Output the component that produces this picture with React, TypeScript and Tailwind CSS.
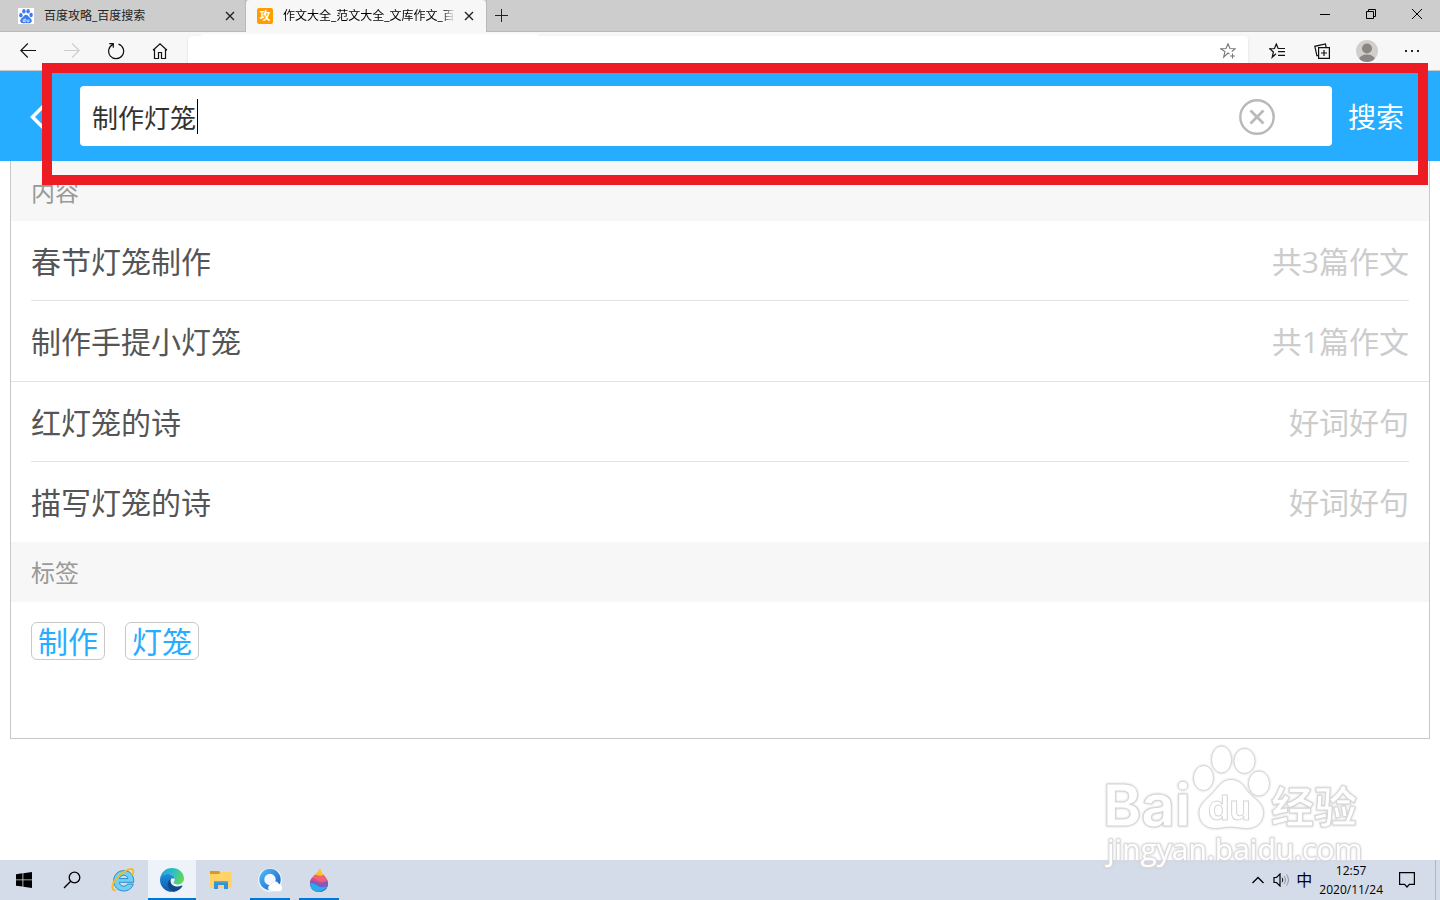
import React from "react";

type Entry = { title: string; note: string };

const groups: Entry[][] = [
  [
    { title: "春节灯笼制作", note: "共3篇作文" },
    { title: "制作手提小灯笼", note: "共1篇作文" },
  ],
  [
    { title: "红灯笼的诗", note: "好词好句" },
    { title: "描写灯笼的诗", note: "好词好句" },
  ],
];

const tags = ["制作", "灯笼"];

const PawIcon = () => (
  <svg width="16" height="16" viewBox="0 0 16 16" className="shrink-0 bg-white">
    <g fill="#3b7bf0">
      <ellipse cx="2.9" cy="7.2" rx="1.7" ry="2.2" />
      <ellipse cx="5.9" cy="3.3" rx="1.7" ry="2.3" />
      <ellipse cx="10.1" cy="3.3" rx="1.7" ry="2.3" />
      <ellipse cx="13.1" cy="7" rx="1.7" ry="2.2" />
      <path d="M8 6.800c1.700 0 2.300 1.500 3.300 2.500s2.500 1.800 2.500 3.500c0 1.600-1.200 2.500-2.700 2.500-1.200 0-2-.3-3.100-.3s-1.900.3-3.100.3c-1.500 0-2.700-.9-2.700-2.500 0-1.700 1.500-2.500 2.500-3.500S6.300 6.800 8 6.800z" />
    </g>
    <path
      d="M7.200 10.400v3.200M7.200 11.700H6a1 1 0 0 0 0 2h1.200M9 11.500v1.600c0 .4.2.6.6.6h1.300v-2.200"
      fill="none"
      stroke="#fff"
      strokeWidth=".8"
    />
  </svg>
);

const CloseIcon = () => (
  <svg width="10" height="10" viewBox="0 0 10 10" stroke="#222" strokeWidth="1.4">
    <path d="M1 1l8 8M9 1L1 9" />
  </svg>
);

const TabStrip = () => (
  <div className="flex h-8 bg-[#cdcdcd] text-xs leading-4 text-[#222]">
    <div className="flex w-[246px] items-center border-r border-b border-[#b9b9b9] pr-2.5 pl-[18px]">
      <PawIcon />
      <span className="ml-2.5 flex-1 whitespace-nowrap">百度攻略_百度搜索</span>
      <button type="button" aria-label="关闭标签页" className="flex">
        <CloseIcon />
      </button>
    </div>
    <div className="flex w-60 items-center rounded-t bg-[#f7f7f7] pr-3 pl-[11px] text-black">
      <span className="flex size-4 shrink-0 items-center justify-center rounded-xs bg-[#ff9c00] text-[11px] leading-4 font-bold text-white">
        攻
      </span>
      <span className="ml-2.5 w-[172px] overflow-hidden mask-r-from-92% whitespace-nowrap">
        作文大全_范文大全_文库作文_百度
      </span>
      <button type="button" aria-label="关闭标签页" className="ml-auto flex">
        <CloseIcon />
      </button>
    </div>
    <div className="flex flex-1 border-b border-l border-[#b9b9b9]">
      <button type="button" aria-label="新建标签页" className="flex w-7 items-center justify-center">
        <svg width="13" height="13" viewBox="0 0 13 13" stroke="#222">
          <path d="M6.500 0v13M0 6.500h13" />
        </svg>
      </button>
      <div className="ml-auto flex h-7">
        <button type="button" aria-label="最小化" className="flex w-[46px] items-center justify-center">
          <svg width="10" height="11" viewBox="0 0 10 11" stroke="#000">
            <path d="M0 5.500h10" />
          </svg>
        </button>
        <button type="button" aria-label="还原" className="flex w-[46px] items-center justify-center">
          <svg width="10" height="10" viewBox="0 0 10 10" fill="none" stroke="#000">
            <path d="M.5 2.500h7v7h-7zM2.500 2.500v-2h7v7h-2" />
          </svg>
        </button>
        <button type="button" aria-label="关闭" className="flex w-[46px] items-center justify-center">
          <svg width="10" height="10" viewBox="0 0 10 10" stroke="#000">
            <path d="M0 0l10 10M10 0L0 10" />
          </svg>
        </button>
      </div>
    </div>
  </div>
);

const Toolbar = () => (
  <div className="flex h-[39px] items-center border-b border-[#c8c8c8] bg-[#f7f7f7] pr-1.5 pl-1.5">
    <button type="button" aria-label="后退" className="flex w-11 justify-center">
      <svg width="16" height="16" viewBox="0 0 16 16" fill="none" stroke="#111" strokeWidth="1.1">
        <path d="M16 7.500H.8M7.800.5l-7 7 7 7" />
      </svg>
    </button>
    <button type="button" aria-label="前进" className="flex w-11 justify-center">
      <svg width="16" height="16" viewBox="0 0 16 16" fill="none" stroke="#ccc" strokeWidth="1.1">
        <path d="M0 7.500h15.200M8.200.5l7 7-7 7" />
      </svg>
    </button>
    <button type="button" aria-label="刷新" className="flex w-11 justify-center">
      <svg width="18" height="18" viewBox="0 0 18 18" fill="none" stroke="#111" strokeWidth="1.200">
        <path d="M11.500 2.100a7.500 7.500 0 1 1-5.500.3M2.300 1.700h4v4" />
      </svg>
    </button>
    <button type="button" aria-label="主页" className="flex w-11 justify-center">
      <svg width="16" height="18" viewBox="0 0 16 18" fill="none" stroke="#111" strokeWidth="1.200">
        <path d="M1 8.300L8 1.700l7 6.600M2.500 7v9.500h4v-6h3v6h4V7" />
      </svg>
    </button>
    <div className="relative ml-1.5 flex h-[30px] flex-1 items-center rounded-t bg-white pr-3 shadow-sm">
      <span className="absolute -top-0.5 left-[13px] h-1 w-[337px] bg-white" />
      <input type="text" aria-label="地址栏" className="min-w-0 flex-1 px-3 text-sm outline-none" />
      <button type="button" aria-label="收藏此页" className="flex">
        <svg width="16" height="16" viewBox="0 0 16 16" fill="none" stroke="#777" strokeWidth="1.1">
          <path d="M9.500 11L8 10l-4.300 4.200 1.200-5.600L.8 5.800l5.200-.3L8 .8l2 4.700 5.200.3-3.400 2.700M12.500 10.500v5M10 13h5" />
        </svg>
      </button>
    </div>
    <div className="ml-1.5 flex items-center">
      <button type="button" aria-label="收藏夹" className="flex w-[45px] justify-center">
        <svg width="16" height="16" viewBox="0 0 16 16" fill="none" stroke="#111" strokeWidth="1.200">
          <path d="M7 10.800l-3.800 3.500L4.400 9 .8 5.800l4.700-.3L7.300 1l1.900 4.500H16M9 8.700h7M9 12.400h7" />
        </svg>
      </button>
      <button type="button" aria-label="集锦" className="flex w-[45px] justify-center">
        <svg width="16" height="16" viewBox="0 0 16 16" fill="none" stroke="#111" strokeWidth="1.200">
          <path d="M4.600 4.600h10.800v10.800H4.600zM10 7v6M7 10h6M12.200 4.500l-.8-3.600L.8 3.300l2.100 9.300h1.700" />
        </svg>
      </button>
      <button type="button" aria-label="个人资料" className="flex w-[45px] justify-center">
        <svg width="22" height="22" viewBox="0 0 22 22">
          <clipPath id="face">
            <circle cx="11" cy="11" r="11" />
          </clipPath>
          <g clipPath="url(#face)">
            <rect width="22" height="22" fill="#d2cfcb" />
            <circle cx="11" cy="8.500" r="5" fill="#8a8684" />
            <ellipse cx="11" cy="19.500" rx="8" ry="5" fill="#8a8684" />
          </g>
        </svg>
      </button>
      <button type="button" aria-label="设置及其他" className="flex w-[45px] justify-center">
        <svg width="14" height="2" viewBox="0 0 14 2" fill="#222">
          <path d="M0 0h2v2H0zM6 0h2v2H6zM12 0h2v2h-2z" />
        </svg>
      </button>
    </div>
  </div>
);

const SearchHeader = () => (
  <form className="flex h-[90px] items-center bg-[#26adff]" onSubmit={(e) => e.preventDefault()}>
    <button type="button" aria-label="返回" className="flex w-20 pt-0.5 pl-[30px]">
      <svg width="16" height="28" viewBox="0 0 16 28" fill="none" stroke="#fff" strokeWidth="3.500">
        <path d="M15 1.500L2.500 14 15 26.500" />
      </svg>
    </button>
    <div className="relative flex h-[60px] flex-1 items-center rounded bg-white pt-0.5 pr-[57px]">
      <input
        type="text"
        aria-label="搜索作文"
        defaultValue="制作灯笼"
        className="h-full min-w-0 flex-1 pl-3 text-[26px] text-[#333] outline-none"
      />
      <span className="absolute top-[13px] left-[117px] h-[35px] w-px bg-black" />
      <button type="reset" aria-label="清空" className="flex">
        <svg width="36" height="36" viewBox="0 0 36 36" fill="none" stroke="#b9b9b9">
          <circle cx="18" cy="18" r="16.700" strokeWidth="2.400" />
          <path d="M11.500 11.500l13 13M24.500 11.500l-13 13" strokeWidth="2.800" />
        </svg>
      </button>
    </div>
    <button type="submit" className="pt-0.5 pr-9 pl-4 text-[28px] leading-10 whitespace-nowrap text-white">
      搜索
    </button>
  </form>
);

const SectionTitle = ({ children }: { children: React.ReactNode }) => (
  <h2 className="flex h-[60px] items-center bg-[#f7f7f7] px-5 pt-0.5 text-2xl leading-9 text-[#999]">{children}</h2>
);

const Results = () => (
  <main className="mx-2.5 border border-t-0 border-[#c8c8c8] bg-white">
    <SectionTitle>内容</SectionTitle>
    <div className="divide-y divide-[#e3e3e3]">
      {groups.map((group, i) => (
        <ul key={i} className="px-5">
          {group.map((entry, j) => (
            <li key={entry.title} className={j === 0 ? "border-b border-[#e3e3e3]" : ""}>
              <a
                href="#"
                className={`flex items-center justify-between pt-0.5 text-3xl leading-10 ${j === 0 ? "h-[79px]" : "h-20"}`}
              >
                <span className="text-[#555]">{entry.title}</span>
                <span className="text-[#ccc]">{entry.note}</span>
              </a>
            </li>
          ))}
        </ul>
      ))}
    </div>
    <SectionTitle>标签</SectionTitle>
    <div className="flex gap-5 px-5 pt-5 pb-[78px]">
      {tags.map((tag) => (
        <a
          key={tag}
          href="#"
          className="flex h-[38px] items-center rounded-md border border-[#c8c8c8] px-1.5 pt-0.5 text-3xl leading-9 text-[#26adff]"
        >
          {tag}
        </a>
      ))}
    </div>
  </main>
);

const Watermark = () => (
  <svg
    width="290"
    height="140"
    viewBox="0 0 290 140"
    className="pointer-events-none absolute right-[60px] bottom-[30px] drop-shadow-[0_0_1px_#ccc]"
  >
    <g fill="#fff" stroke="#d6d6d6">
      <text x="13" y="96" fontSize="58" fontWeight="700" className="font-['Inter',sans-serif]">
        Bai
      </text>
      <ellipse cx="113.500" cy="48" rx="10" ry="12.500" />
      <ellipse cx="131.500" cy="29.500" rx="10" ry="13.500" />
      <ellipse cx="154.500" cy="31" rx="10.500" ry="12.500" />
      <ellipse cx="169" cy="53.500" rx="10.500" ry="12.500" />
      <path d="M141 49.500c8 0 12 5 16 11 5 7 17 12 16.500 23-.5 9-7 15-17 15-6 0-10-1.500-16-1.500s-10 1.500-15 1.500c-10 0-16-6-16.500-15-.5-10 9-15 15-22 5-6 9-12 17-12z" />
      <text x="118" y="90" fontSize="34" fontWeight="700" className="font-['Inter',sans-serif]">
        du
      </text>
      <text x="181" y="93" fontSize="43" fontWeight="700" className="font-['Noto_Sans_CJK_SC',sans-serif]">
        经验
      </text>
    </g>
    <text
      x="17"
      y="130"
      fontSize="30"
      fill="#fff"
      stroke="#dcdcdc"
      strokeWidth="2"
      paintOrder="stroke"
      className="font-['Open_Sans',sans-serif]"
    >
      jingyan.baidu.com
    </text>
  </svg>
);

const Taskbar = () => (
  <footer className="flex h-10 items-stretch bg-[#d4dbe9]">
    <button type="button" aria-label="开始" className="flex w-12 items-center justify-center">
      <svg width="16" height="16" viewBox="0 0 16 16" fill="#000">
        <path d="M0 2.200L6.500 1.300v6.200H0zM7.300 1.200L16 0v7.500H7.300zM0 8.300h6.500v6.300L0 13.700zM7.300 8.300H16V16l-8.700-1.300z" />
      </svg>
    </button>
    <button type="button" aria-label="搜索" className="flex w-12 items-center justify-center">
      <svg width="18" height="18" viewBox="0 0 18 18" fill="none" stroke="#000" strokeWidth="1.300">
        <circle cx="11.500" cy="6.500" r="5.300" />
        <path d="M7.700 10.300L1 17" />
      </svg>
    </button>
    <div className="ml-[3px] flex gap-px">
      <button type="button" aria-label="Internet Explorer" className="flex w-12 items-center justify-center">
        <svg width="24" height="24" viewBox="0 0 24 24">
          <path
            d="M12.700 2.600C6.900 2.600 2.700 7 2.700 12.800S6.900 23 12.700 23c4.700 0 8.400-2.700 9.600-7h-5.800c-.7 1.400-2 2.200-3.700 2.200-2.500 0-4.200-1.500-4.400-3.900h14.300c.5-6.800-3.400-11.700-10-11.700zM8.500 10.600c.4-2 2-3.300 4.200-3.300 2.300 0 3.900 1.300 4.200 3.300z"
            fill="#6fd0f5"
            stroke="#2385bd"
            strokeWidth=".9"
            fillRule="evenodd"
          />
          <path
            d="M4.800 22.300C-.8 22.700 1 14.500 7.500 8.300 13.500 2.500 20.500-.6 22 1.900c.8 1.200.4 3.100-.8 5.200"
            fill="none"
            stroke="#f5bd22"
            strokeWidth="1.900"
          />
        </svg>
      </button>
      <button
        type="button"
        aria-label="Microsoft Edge"
        className="flex w-12 items-center justify-center border-t-2 border-b-2 border-t-transparent border-b-[#0078d7] bg-[#eef2f9]"
      >
        <svg width="24" height="24" viewBox="0 0 24 24">
          <defs>
            <linearGradient id="edgeTop" x1="0" x2="1" y1=".2" y2=".5">
              <stop offset="0" stopColor="#1e9fe0" />
              <stop offset=".5" stopColor="#2bbfc5" />
              <stop offset="1" stopColor="#62d957" />
            </linearGradient>
            <linearGradient id="edgeLeft" x1="0" x2="0" y1="0" y2="1">
              <stop offset="0" stopColor="#1b8fdc" />
              <stop offset="1" stopColor="#1059a8" />
            </linearGradient>
          </defs>
          <path d="M0 11C.6 4.800 5.600 0 12 0c7 0 12 5 12 10.400 0 3.500-2.700 6-6.100 6-2.800 0-4.400-.9-4.400-1.900 0-.6 1.200-1.200 1.200-3C14.700 8.600 11.700 6 7.800 6 4.300 6 1.300 8 0 11z" fill="url(#edgeTop)" />
          <path d="M0 12c0-3.700 3.500-6 7.800-6 3.900 0 6.600 2.300 6.900 5.200-.9-1.300-2.600-1.300-3.700-.4-1.900 1.400-2.500 3.500-2 6 .7 3.400 3 6 6 6.700C7.500 25.300 0 20 0 12z" fill="url(#edgeLeft)" />
          <path d="M11 10.800c-3.200 1.800-4 5.200-2.600 8.500 1.100 2.600 3.700 4.200 6.100 4.400 3.300-.7 6.200-2.800 7.900-5.500.3-.5-.1-.8-.6-.6C16 20.300 8.800 17.200 11 10.800z" fill="#114a8b" />
        </svg>
      </button>
      <button type="button" aria-label="文件资源管理器" className="flex w-12 items-center justify-center">
        <svg width="22" height="20" viewBox="0 0 22 20">
          <path d="M0 1h9l1 1v3H0z" fill="#d99a16" />
          <path d="M0 4h9l2-2h10.500v16H0z" fill="#ffd367" />
          <path d="M4 19v-8h14v8h-4v-4H8v4z" fill="#3490db" />
          <path d="M4 11h14v1.500H4z" fill="#59a9e4" />
        </svg>
      </button>
      <button type="button" aria-label="QQ浏览器" className="flex w-12 flex-col items-center">
        <span className="flex h-[38px] items-center pt-0.5">
          <svg width="24" height="24" viewBox="0 0 24 24">
            <defs>
              <linearGradient id="cloudRing" x1="0" x2="1" y1="0" y2="1">
                <stop offset="0" stopColor="#4db4f5" />
                <stop offset="1" stopColor="#1b66c9" />
              </linearGradient>
            </defs>
            <circle cx="12" cy="12" r="12" fill="#eef4fb" />
            <circle cx="12" cy="11.500" r="8.200" fill="#f4f8fd" stroke="url(#cloudRing)" strokeWidth="5" />
            <path d="M13.500 23.500a3.500 3.500 0 0 1-.6-6.900 4.300 4.300 0 0 1 8-.5 3.600 3.600 0 0 1 0 7.400z" fill="#fff" stroke="#c8def2" strokeWidth=".5" />
          </svg>
        </span>
        <span className="h-0.5 w-10 bg-[#0078d7]" />
      </button>
      <button type="button" aria-label="画图 3D" className="flex w-12 flex-col items-center">
        <span className="flex h-[38px] items-center pt-0.5">
          <svg width="20" height="24" viewBox="0 0 20 24">
            <clipPath id="drop">
              <path d="M11 0c.5 3 2 5 4 7.300 2.500 3 4 5 4 8.200C19 20.300 15 24 10 24s-9-3.700-9-8.500c0-3.500 1.500-5.500 4.300-8.300C7.500 5 10 3 11 0z" />
            </clipPath>
            <g clipPath="url(#drop)">
              <rect width="20" height="24" fill="#fdc417" />
              <path d="M0 8c5-3 8-.5 11-.3 3 .2 3-1.700 9-2.700V24H0z" fill="#ee6379" />
              <path d="M0 10c6-1.500 8 3 12 3.500 4 .5 5-1 8-2V24H0z" fill="#d44e8c" />
              <path d="M0 13c5-1.500 7 1 10 1.700 4 .8 6-1.500 10-.7V24H0z" fill="#7c5cc4" />
              <path d="M0 15.500c4-1 6 .5 9 2.500s6 1.500 11-.5V24H0z" fill="#27aeea" />
              <path d="M8 24c4-.5 8-2.500 11-6l1 6z" fill="#1585cf" />
            </g>
          </svg>
        </span>
        <span className="h-0.5 w-10 bg-[#0078d7]" />
      </button>
    </div>
    <div className="ml-auto flex items-center text-xs text-black">
      <svg width="12" height="8" viewBox="0 0 12 8" fill="none" stroke="#000" strokeWidth="1.300">
        <path d="M.5 7L6 1.500 11.500 7" />
      </svg>
      <svg width="17" height="14" viewBox="0 0 17 14" fill="none" className="ml-[9px]">
        <path d="M1 4.500h2.500L7 1v12L3.500 9.500H1z" stroke="#000" strokeWidth="1.200" />
        <path d="M9 4.800c1 1.300 1 3.100 0 4.400" stroke="#000" />
        <path d="M11 3c2 2.300 2 5.700 0 8M13.300 1.300c2.800 3.300 2.800 8.100 0 11.400" stroke="#8e949e" />
      </svg>
      <span className="ml-1.5 text-base leading-5">中</span>
      <div className="ml-[7px] text-center leading-[19px]">
        <div>12:57</div>
        <div>2020/11/24</div>
      </div>
      <svg width="16" height="16" viewBox="0 0 16 16" fill="none" stroke="#000" strokeWidth="1.200" className="ml-4">
        <path d="M.6.6h14.800v11.800h-5L8 15l-2.400-2.600h-5z" />
      </svg>
      <span className="mr-1 ml-5 h-10 w-px bg-[#aeb6c6]" />
    </div>
  </footer>
);

const App = () => {
  return (
    <div className="relative flex min-h-screen flex-col bg-white font-['Open_Sans','Noto_Sans_CJK_SC',sans-serif]">
      <TabStrip />
      <Toolbar />
      <SearchHeader />
      <Results />
      <div className="flex-1" />
      <Taskbar />
      <Watermark />
      {/* highlight frame round the search bar */}
      <div className="pointer-events-none absolute top-[63px] right-3 left-[42px] h-[122px] border-10 border-[#ed1c24]" />
    </div>
  );
};

export default App;
